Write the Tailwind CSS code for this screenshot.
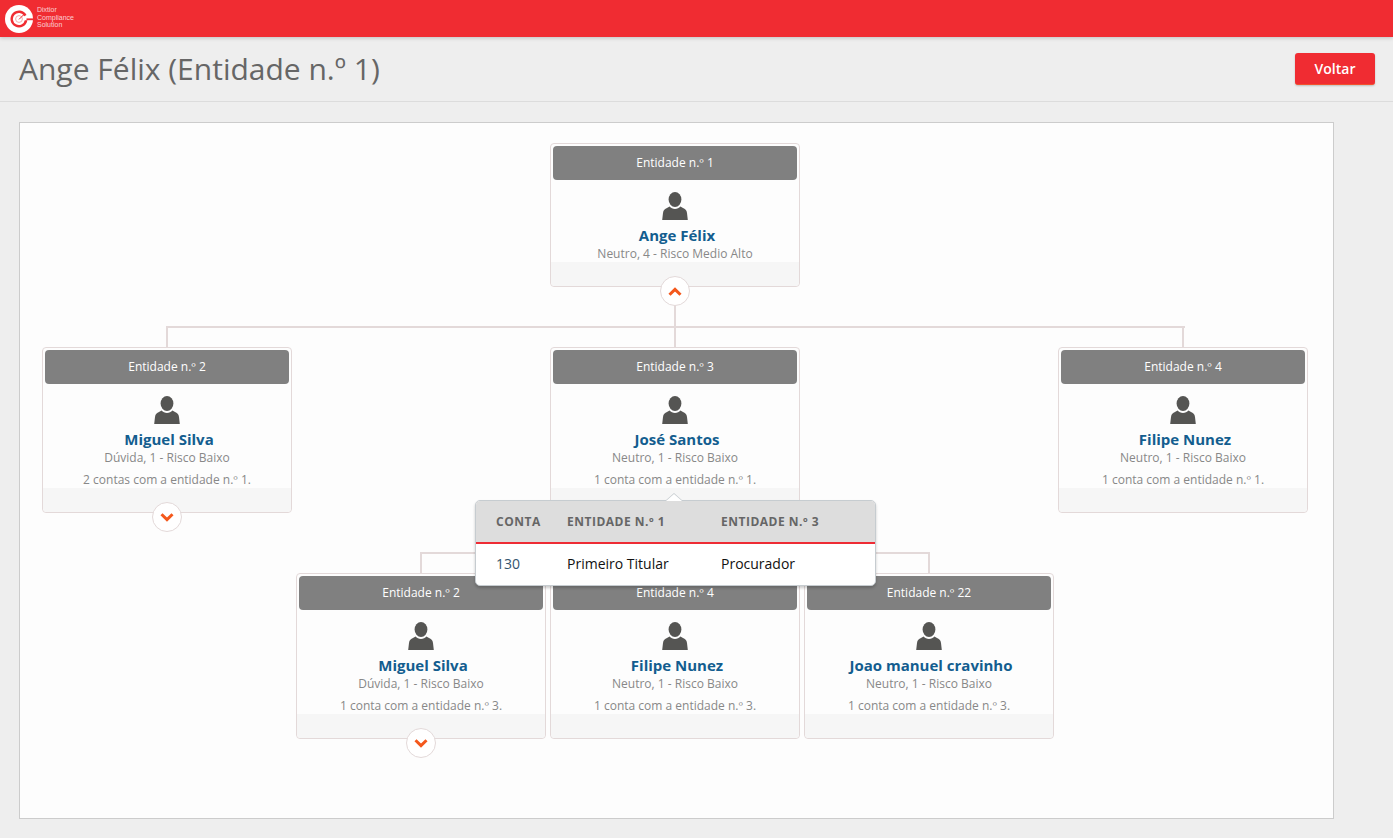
<!DOCTYPE html>
<html lang="en">
<head>
<meta charset="UTF-8">
<title>Ange Félix</title>
<script src="https://cdn.jsdelivr.net/npm/@tailwindcss/browser@4"></script>
</head>
<body class="bg-[#eeeeee] h-[838px] overflow-hidden font-['Open_Sans',sans-serif]">

<!-- top bar -->
<header class="h-[37px] bg-[#f02c32] shadow-[0_1px_4px_rgba(0,0,0,0.2)] flex items-center pl-[5px] gap-[4px]">
  <svg width="28" height="28" viewBox="0 0 28 28">
    <circle cx="14" cy="14" r="14" fill="#fff"/>
    <path d="M21.5 10A8.5 8.5 0 1 0 22.4 15.2L19.8 15.2A6 6 0 1 1 19.2 11.2Z" fill="#f02c32"/>
    <circle cx="14" cy="14" r="3.4" fill="none" stroke="#f8a9ab" stroke-width="1"/>
    <path d="M14 14.4L18.4 10" stroke="#f02c32" stroke-width="1"/>
    <rect x="21.5" y="13.4" width="6.5" height="1.8" fill="#f02c32"/>
  </svg>
  <div class="font-['Liberation_Sans',sans-serif] text-[7px] leading-[7.6px] text-[#fbd0d2] pb-[2px]">Dixtior<br>Compliance<br>Solution</div>
</header>

<!-- title row -->
<div class="h-[65px] border-b border-[#dcdcdc] flex items-center justify-between pl-[19px] pr-[18px]">
  <h1 class="text-[30px] text-[#666666] font-normal pb-[2px]">Ange Félix (Entidade n.º 1)</h1>
  <button class="w-[80px] h-[32px] bg-[#f02c32] rounded-[3px] border-b border-[#f4502c] text-white text-[14px] font-semibold shadow-[0_1px_2px_rgba(0,0,0,0.2)]">Voltar</button>
</div>

<!-- tree panel -->
<main class="relative ml-[19px] mt-[20px] w-[1315px] h-[697px] bg-[#fdfdfd] border border-[#cccccc]">
  <div id="tree" class="absolute inset-0">
    <!-- connectors -->
    <div class="absolute left-[147px] top-[203px] w-[1018px] h-[2px] bg-[#e3d9d9]"></div>
    <div class="absolute left-[654px] top-[182px] w-[2px] h-[42px] bg-[#e3d9d9]"></div>
    <div class="absolute left-[146px] top-[203px] w-[2px] h-[22px] bg-[#e3d9d9]"></div>
    <div class="absolute left-[1162px] top-[203px] w-[2px] h-[22px] bg-[#e3d9d9]"></div>
    <div class="absolute left-[400px] top-[429px] w-[510px] h-[2px] bg-[#e3d9d9]"></div>
    <div class="absolute left-[654px] top-[390px] w-[2px] h-[60px] bg-[#e3d9d9]"></div>
    <div class="absolute left-[400px] top-[429px] w-[2px] h-[22px] bg-[#e3d9d9]"></div>
    <div class="absolute left-[908px] top-[429px] w-[2px] h-[22px] bg-[#e3d9d9]"></div>
  </div>

  <!-- account popover -->
  <div class="absolute left-[455px] top-[377px] w-[401px] h-[86px] z-10 bg-white border border-[#c6ccd0] rounded-[5px] shadow-[0_2px_3px_rgba(0,0,0,0.2)]">
    <div class="absolute left-[189px] top-[-8px] w-0 h-0 border-x-[9px] border-x-transparent border-b-[8px] border-b-[#c6ccd0]"></div>
    <div class="absolute left-[190px] top-[-7px] w-0 h-0 border-x-[8px] border-x-transparent border-b-[7px] border-b-white"></div>
    <div class="grid grid-cols-[71px_154px_1fr] pl-[20px] h-[43px] items-center bg-[#dddddd] border-b-2 border-[#ee2c35] rounded-t-[4px] text-[12px] font-bold tracking-[0.5px] text-[#666666]">
      <span>CONTA</span><span>ENTIDADE N.º 1</span><span>ENTIDADE N.º 3</span>
    </div>
    <div class="grid grid-cols-[71px_154px_1fr] pl-[20px] h-[39px] items-center text-[14px] text-[#111111]">
      <span class="text-[#33546e]">130</span><span>Primeiro Titular</span><span>Procurador</span>
    </div>
  </div>
</main>

<script>
const userIcon = '<svg width="26" height="28" viewBox="0 0 26 28" fill="#555553"><ellipse cx="13" cy="7.5" rx="6.4" ry="7.5"/><path d="M0.2 28L1 21C1.3 18 3 17 5 16L7.6 14.6C10 17.8 16 17.8 18.4 14.6L21 16C23 17 24.7 18 25 21L25.8 28Z"/></svg>';
const chevronUp = '<svg width="14" height="9" viewBox="0 0 14 9" fill="none" stroke="#f4581c" stroke-width="3"><path d="M1.5 7.8L7 2.4L12.5 7.8"/></svg>';
const chevronDown = '<svg width="14" height="9" viewBox="0 0 14 9" fill="none" stroke="#f4581c" stroke-width="3"><path d="M1.5 1.2L7 6.6L12.5 1.2"/></svg>';

// page coordinates minus the panel origin
const nodes = [
  { x: 530, y: 20, h: 144, tag: 'Entidade n.º 1', name: 'Ange Félix', info: 'Neutro, 4 - Risco Medio Alto', toggle: chevronUp },
  { x: 22, y: 224, h: 166, tag: 'Entidade n.º 2', name: 'Miguel Silva', info: 'Dúvida, 1 - Risco Baixo', note: '2 contas com a entidade n.º 1.', toggle: chevronDown },
  { x: 530, y: 224, h: 166, tag: 'Entidade n.º 3', name: 'José Santos', info: 'Neutro, 1 - Risco Baixo', note: '1 conta com a entidade n.º 1.' },
  { x: 1038, y: 224, h: 166, tag: 'Entidade n.º 4', name: 'Filipe Nunez', info: 'Neutro, 1 - Risco Baixo', note: '1 conta com a entidade n.º 1.' },
  { x: 276, y: 450, h: 166, tag: 'Entidade n.º 2', name: 'Miguel Silva', info: 'Dúvida, 1 - Risco Baixo', note: '1 conta com a entidade n.º 3.', toggle: chevronDown },
  { x: 530, y: 450, h: 166, tag: 'Entidade n.º 4', name: 'Filipe Nunez', info: 'Neutro, 1 - Risco Baixo', note: '1 conta com a entidade n.º 3.' },
  { x: 784, y: 450, h: 166, tag: 'Entidade n.º 22', name: 'Joao manuel cravinho', info: 'Neutro, 1 - Risco Baixo', note: '1 conta com a entidade n.º 3.' },
];

const tree = document.getElementById('tree');
nodes.forEach(n => {
  const card = document.createElement('div');
  card.className = 'absolute w-[250px] bg-[#fdfdfd] border border-[#e3d9d9] rounded-[4px] flex flex-col items-center text-center p-[2px] pb-0';
  card.style.left = n.x + 'px';
  card.style.top = n.y + 'px';
  card.style.height = n.h + 'px';
  card.innerHTML = `
    <div class="w-full h-[34px] shrink-0 flex items-center justify-center bg-[#808080] rounded-[4px] text-[12px] text-white">${n.tag}</div>
    <div class="mt-[12px] h-[28px]">${userIcon}</div>
    <div class="mt-[4px] pl-[4px] text-[15px] leading-[22px] font-bold text-[#135d8f]">${n.name}</div>
    <div class="mt-[1px] text-[12px] leading-[14px] text-[#888888]">${n.info}</div>
    ${n.note ? `<div class="mt-[8px] text-[12px] leading-[14px] text-[#888888]">${n.note}</div>` : ''}
    <div class="absolute left-0 right-0 bottom-0 h-[24px] bg-[#f6f6f6] rounded-b-[4px]"></div>
    ${n.toggle ? `<div class="absolute left-[109px] bottom-[-20px] z-[1] w-[30px] h-[30px] flex items-center justify-center bg-white border border-[#e3d9d9] rounded-full">${n.toggle}</div>` : ''}
  `;
  tree.appendChild(card);
});
</script>
</body>
</html>
